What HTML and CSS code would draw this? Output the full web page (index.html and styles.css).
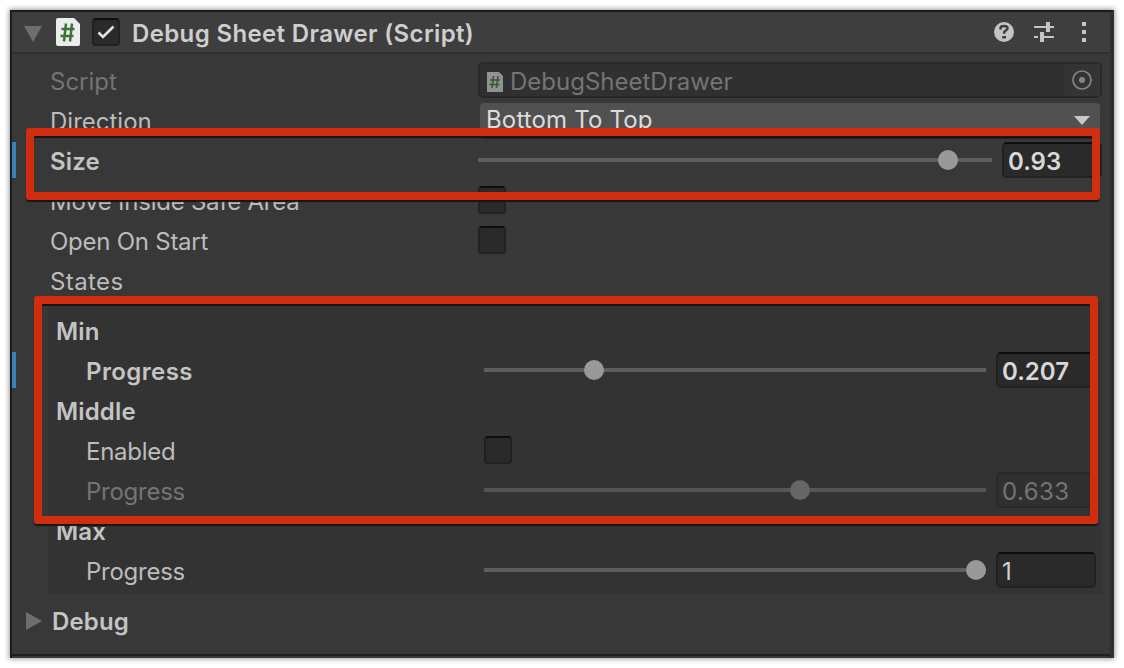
FILE: index.html
```html
<!DOCTYPE html>
<html lang="en">
<head>
<meta charset="utf-8">
<title>Debug Sheet Drawer</title>
<link rel="stylesheet" href="styles.css">
</head>
<body>
<main class="inspector">
  <header class="header">
    <svg class="fold" width="18" height="16" viewBox="0 0 18 16"><path d="M0 0H18L9 16Z" fill="#6e6e6e"/></svg>
    <svg class="script-icon" width="24" height="28" viewBox="0 0 24 28"><path d="M2 0H18L24 6V26Q24 28 22 28H2Q0 28 0 26V2Q0 0 2 0Z" fill="#ececec"/><path d="M10 5.500L8 23.500M16 5.500L14 23.500M5.500 11H18.500M4.500 18H17.500" stroke="#3c7436" stroke-width="2.500" fill="none"/></svg>
    <span class="check"><svg width="24" height="24" viewBox="0 0 24 24"><path d="M4.500 12.500L9 17L19.500 6.500" fill="none" stroke="#e4e4e4" stroke-width="2.600"/></svg></span>
    <h1 class="title">Debug Sheet Drawer (Script)</h1>
    <svg class="tools" width="102" height="24" viewBox="0 0 102 24">
      <circle cx="12" cy="12" r="10" fill="#c4c4c4"/>
      <path d="M8.500 9.500V8.200Q8.500 6 12 6T15.500 8.300Q15.500 9.800 13.600 10.700Q12 11.500 12 13.700" fill="none" stroke="#3e3e3e" stroke-width="2.500"/><path d="M10.200 16H14V18.500H10.200Z" fill="#3e3e3e"/>
      <path d="M42 7H54M58 7H62M42 17H46M52 17H62" stroke="#c4c4c4" stroke-width="2"/><path d="M54 2H58V12H54ZM48 12H52V22H48Z" fill="#c4c4c4"/>
      <path d="M90 2H94V6H90ZM90 10H94V14H90ZM90 18H94V22H90Z" fill="#c4c4c4"/>
    </svg>
  </header>

  <section class="rows">
    <div class="row off"><span class="label">Script</span>
      <div class="object"><svg width="18" height="20" viewBox="0 0 18 20"><path d="M1 0H13L17 4V20H1Z" fill="#929292"/><path d="M7.500 4L6 16M12 4L10.500 16M4 8H14M3.500 12.500H13.500" stroke="#365b33" stroke-width="1.700"/></svg><span class="value">DebugSheetDrawer</span>
        <span class="picker"><svg width="20" height="20" viewBox="0 0 20 20"><circle cx="10" cy="10" r="9" fill="none" stroke="#858585" stroke-width="1.700"/><circle cx="10" cy="10" r="3" fill="#858585"/></svg></span></div></div>
    <div class="row"><span class="label">Direction</span>
      <div class="dropdown"><span>Bottom To Top</span><svg width="16" height="9" viewBox="0 0 16 9"><path d="M0 0H16L8 9Z" fill="#c8c8c8"/></svg></div></div>
    <div class="row strong changed"><span class="label">Size</span>
      <div class="slider"><i class="thumb" style="left:460px"></i></div><div class="number">0.93</div></div>
    <div class="row"><span class="label tight">Move Inside Safe Area</span><span class="box"></span></div>
    <div class="row"><span class="label tight">Open On Start</span><span class="box"></span></div>
    <div class="row"><span class="label loose">States</span></div>
  </section>

  <section class="states">
    <div class="row strong"><span class="label">Min</span></div>
    <div class="row strong changed nested"><span class="label loose">Progress</span><div class="slider"><i class="thumb" style="left:100px"></i></div><div class="number">0.207</div></div>
    <div class="row strong"><span class="label">Middle</span></div>
    <div class="row nested"><span class="label tight">Enabled</span><span class="box"></span></div>
    <div class="row nested off"><span class="label tight">Progress</span><div class="slider"><i class="thumb" style="left:306px"></i></div><div class="number loose">0.633</div></div>
    <div class="row strong"><span class="label">Max</span></div>
    <div class="row nested"><span class="label tight">Progress</span><div class="slider"><i class="thumb" style="left:482px"></i></div><div class="number">1</div></div>
  </section>

  <footer class="debug"><svg width="16" height="18" viewBox="0 0 16 18"><path d="M0 0L16 9L0 18Z" fill="#6e6e6e"/></svg><span>Debug</span></footer>
  <div class="mark mark-size"></div>
  <div class="mark mark-states"></div>
</main>
</body>
</html>
```
FILE: styles.css
```css
* { box-sizing: border-box; }
body {
  margin: 0;
  padding: 10px;
  background: #fff;
  font: 400 24px/36px Inter, "Liberation Sans", sans-serif;
  color: #bcbcbc;
}
svg { display: block; flex: none; }
.inspector {
  position: relative;
  width: 1104px;
  height: 648px;
  background: #383838;
  border: solid #1b1b1b;
  border-width: 2px 4px 0 2px;
  border-right-color: #303030;
  box-shadow: 0 0 5px 1px rgba(0, 0, 0, .4);
}
.header {
  display: flex;
  align-items: center;
  height: 42px;
  padding: 0 16px 0 12px;
  background: #3e3e3e;
  border-bottom: 2px solid #303030;
}
.script-icon { margin-left: 14px; }
.fold { margin-top: 4px; }
.check, .box {
  flex: none;
  width: 28px;
  height: 28px;
  background: #2a2a2a;
  border: 2px solid #212121;
  border-top-color: #0d0d0d;
  border-radius: 4px;
}
.check { margin-left: 12px; }
.title {
  flex: 1;
  margin: 0 0 0 12px;
  padding-top: 3px;
  font-size: 24px;
  font-weight: 600;
  letter-spacing: .36px;
  color: #cecece;
  white-space: nowrap;
}
.rows { padding-top: 6px; }
.row {
  position: relative;
  display: flex;
  align-items: center;
  height: 40px;
  padding: 0 8px 0 38px;
}
.label { flex: none; width: 428px; padding-top: 3px; white-space: nowrap; }
.strong { font-weight: 600; color: #c4c4c4; letter-spacing: .15px; }
.off { color: #747474; }
.tight { letter-spacing: -.25px; }
.loose { letter-spacing: .4px; }
.changed::before {
  content: "";
  position: absolute;
  left: 0;
  top: 2px;
  width: 4px;
  height: 36px;
  background: #3b82bd;
}
.object {
  display: flex;
  align-items: center;
  flex: 1;
  height: 36px;
  padding-left: 6px;
  border: 2px solid #292929;
  border-radius: 5px;
  background: #303030;
}
.object > svg { margin-top: 3px; }
.value { flex: 1; padding: 3px 0 0 6px; }
.picker {
  display: grid;
  place-items: center;
  width: 36px;
  height: 32px;
  background: #343434;
}
.dropdown {
  display: flex;
  align-items: center;
  justify-content: space-between;
  flex: 1;
  height: 36px;
  margin: 2px 2px 0 2px;
  padding: 0 10px 0 6px;
  background: #515151;
  border-bottom: 2px solid #252525;
  border-radius: 4px;
  color: #dcdcdc;
  letter-spacing: .15px;
}
.slider {
  position: relative;
  flex: 1;
  height: 4px;
  background: #5e5e5e;
}
.thumb {
  position: absolute;
  top: -8px;
  width: 20px;
  height: 20px;
  border-radius: 50%;
  background: #999;
}
.number {
  width: 100px;
  height: 36px;
  margin-left: 10px;
  padding: 1px 0 0 4px;
  background: #2a2a2a;
  border: 2px solid #212121;
  border-top-color: #0d0d0d;
  border-radius: 5px;
  line-height: 34px;
  color: #d0d0d0;
}
.strong .number { color: #d8d8d8; letter-spacing: 0; }
.off .number { color: #747474; background: #303030; border-color: #292929; }
.off .thumb { background: #666; }
.off .slider { background: #555; }
.states {
  position: relative;
  margin: 2px 8px 0 36px;
  padding-top: 8px;
  height: 292px;
  background: #333;
}
.states .row { padding: 0 6px 0 8px; }
.states .nested { padding-left: 38px; }
.states .nested .label { width: 398px; }
.states .changed::before { left: -36px; }
.debug {
  display: flex;
  align-items: center;
  gap: 10px;
  height: 62px;
  padding: 0 0 6px 14px;
  border-bottom: 2px solid #202020;
  font-weight: 600;
  color: #c4c4c4;
  letter-spacing: .15px;
}
.debug span { padding-top: 2px; }
.mark {
  position: absolute;
  border: 8px solid #d12e10;
  border-radius: 3px;
  box-shadow: 0 2px 1px #151515, inset 0 2px 1px #151515;
}
.mark-size { left: 14px; top: 116px; width: 1074px; height: 72px; }
.mark-states { left: 22px; top: 284px; width: 1064px; height: 228px; }
```
